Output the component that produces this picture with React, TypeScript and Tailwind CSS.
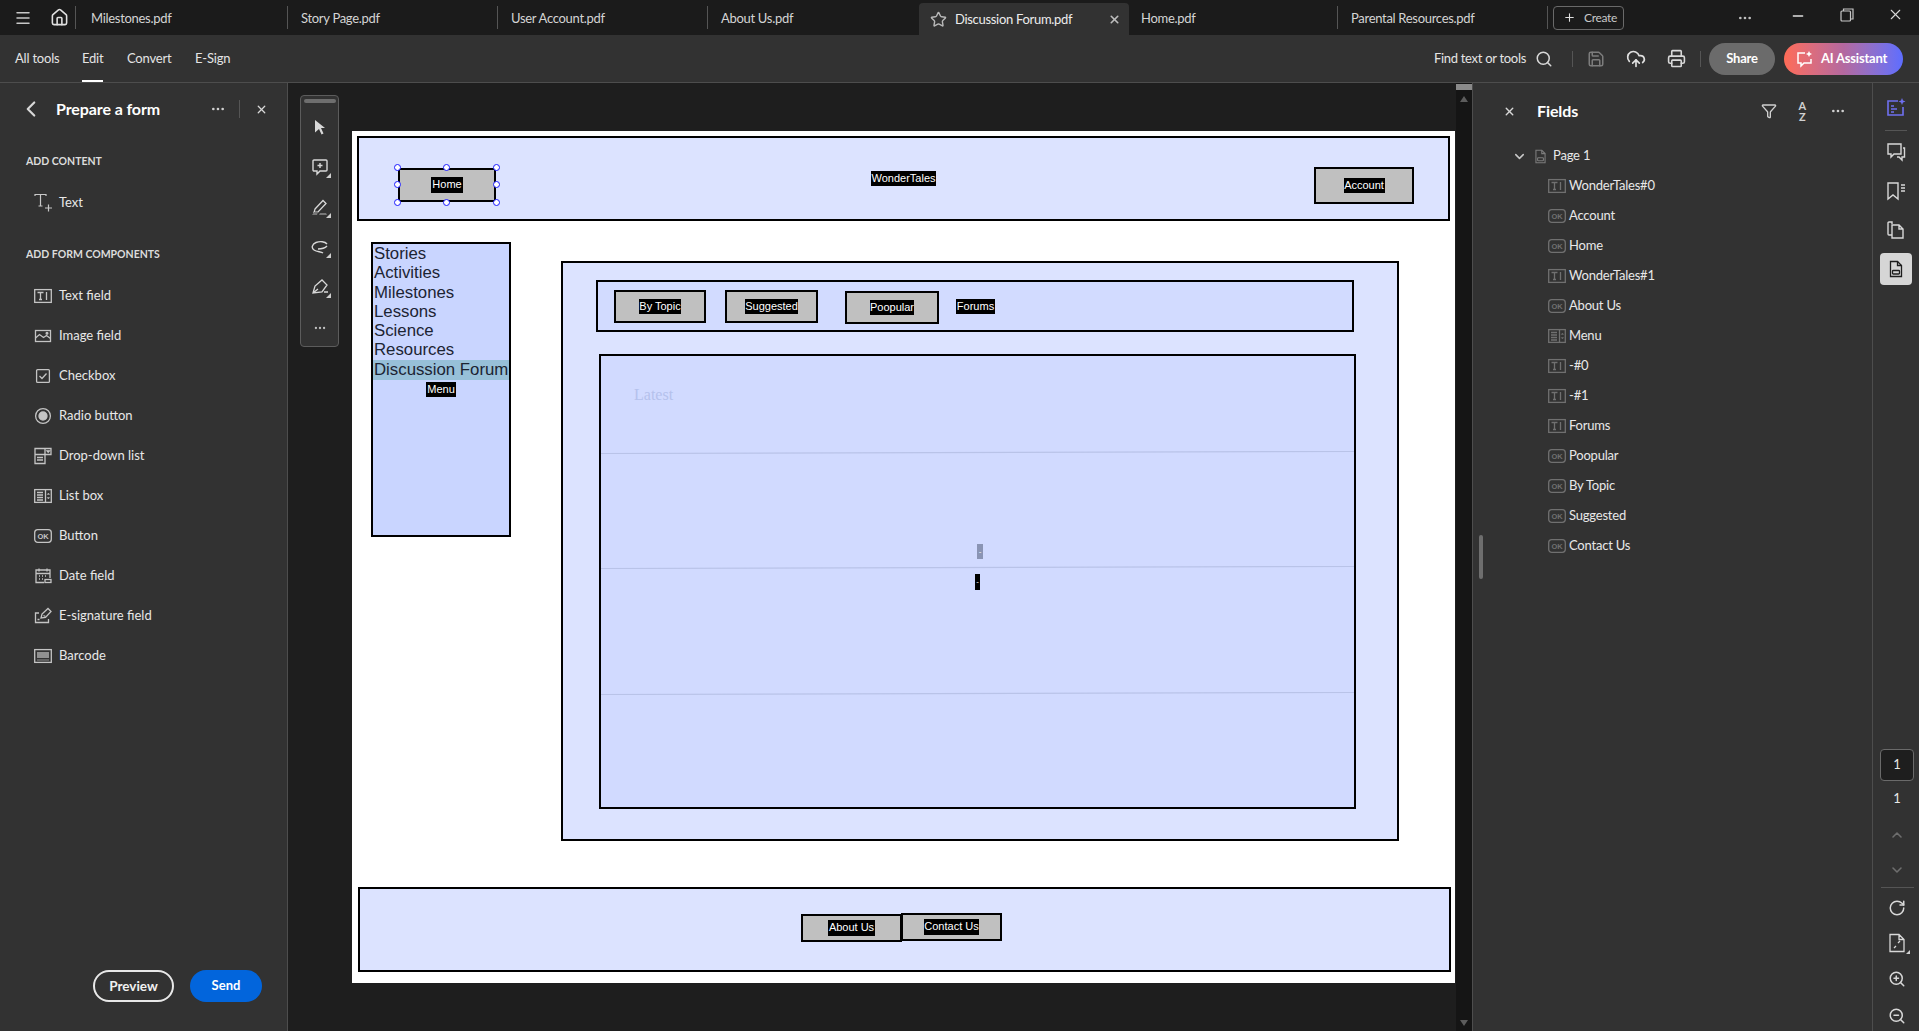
import React from 'react';
import {
    ChevronDown, ChevronLeft, ChevronUp, CloudUpload, Ellipsis, Funnel, House, Menu, Minus, Plus,
    Printer, RotateCw, Save, Search, Star, X, ZoomIn, ZoomOut,
} from 'lucide-react';

const tabs = [
    { name: 'Milestones.pdf', cls: 'w-[212px] pl-[15px] border-l' },
    { name: 'Story Page.pdf', cls: 'w-[210px] pl-[13px] border-l' },
    { name: 'User Account.pdf', cls: 'w-[210px] pl-[13px] border-l' },
    { name: 'About Us.pdf', cls: 'w-[212px] pl-[13px] border-l' },
];

const Svg = ({ children, size = 18, className = '' }: { children: React.ReactNode; size?: number; className?: string }) => (
    <svg width={size} height={size} viewBox="0 0 18 18" fill="none" stroke="currentColor" strokeWidth="1.3" className={className}>
        {children}
    </svg>
);

// form field glyphs
const TextFieldIcon = () => (
    <Svg>
        <rect x="0.7" y="2.6" width="16.6" height="12.8" />
        <path d="M3.5 5.5h6M6.5 5.5v7M5 12.5h3M12.5 5v8" />
    </Svg>
);
const ImageIcon = () => (
    <Svg>
        <rect x="1.5" y="3.5" width="15" height="11" />
        <path d="M1.5 11l4-3.5 4 3 3-2 4 3" />
        <circle cx="13" cy="6.3" r="0.9" fill="currentColor" />
    </Svg>
);
const CheckIcon = () => (
    <Svg>
        <rect x="2.6" y="2.6" width="12.8" height="12.8" rx="1" />
        <path d="M5.5 9l2.5 2.5 4.5-5" />
    </Svg>
);
const RadioIcon = () => (
    <Svg>
        <circle cx="9" cy="9" r="7.4" />
        <circle cx="9" cy="9" r="4" fill="currentColor" />
    </Svg>
);
const DropdownIcon = () => (
    <Svg>
        <path d="M1 1.5h16v6H11v9H1z" />
        <path d="M1 7.5h10M11 1.5v6M3 10.5h6M3 13h6" />
        <path d="M13 3.8h2.4l-1.2 1.4z" fill="currentColor" />
    </Svg>
);
const ListBoxIcon = () => (
    <Svg>
        <rect x="0.7" y="2.6" width="16.6" height="12.8" />
        <path d="M11.5 2.6v12.8M3 5.5h6M3 8h6M3 10.5h6M3 13h6" />
        <path d="M13.2 7.5l1.2-1.5 1.2 1.5zM13.2 10.5l1.2 1.5 1.2-1.5z" fill="currentColor" strokeWidth="0.4" />
    </Svg>
);
const OkIcon = () => (
    <Svg>
        <rect x="0.7" y="2.7" width="16.6" height="12.6" rx="3" />
        <text x="9" y="11.7" textAnchor="middle" fontSize="7.5" fontFamily="Liberation Sans, sans-serif" fill="currentColor" stroke="none" fontWeight="700">OK</text>
    </Svg>
);
const DateIcon = () => (
    <Svg>
        <path d="M10 15.5H2V3h14v8M2 6.5h14M5 1.5v3M13 1.5v3" />
        <path d="M5 9h1M8 9h1M11 9h1M5 12h1M8 12h1" />
        <rect x="11" y="12.5" width="6" height="3" />
    </Svg>
);
const SignIcon = () => (
    <Svg>
        <path d="M5 6H1.500v9.500h13V12" />
        <path d="M7 11l1-4 6-5.500 3 3-5.500 6z" />
        <path d="M3.500 12.500h2M9.500 8.500l2 1" />
    </Svg>
);
const BarcodeIcon = () => (
    <Svg>
        <rect x="0.7" y="2.6" width="16.6" height="12.8" />
        <path d="M4 5v6M6 5v6M8 5v6M10 5v6M12 5v6M14 5v6M4 12.500v1M6 12.500v1M8 12.500v1M10 12.500v1M12 12.500v1M14 12.500v1" />
    </Svg>
);
const PageDocIcon = ({ size = 18 }: { size?: number }) => (
    <Svg size={size}>
        <path d="M3.500 1.500h7l4 4v11h-11z" />
        <path d="M10.500 1.500v4h4" />
        <rect x="5.500" y="10.500" width="7" height="3.500" rx="0.8" />
    </Svg>
);
const Corner = () => <span className="absolute right-[-1px] bottom-[-1px] w-0 h-0 border-l-[5px] border-l-transparent border-b-[5px] border-b-[#d0d0d0]" />;

const ToolIcon = ({ children, corner = true, cls }: { children: React.ReactNode; corner?: boolean; cls: string }) => (
    <div className={`relative w-[20px] h-[20px] flex items-center justify-center text-[#d8d8d8] ${cls}`}>
        {children}
        {corner && <Corner />}
    </div>
);

const formItems = [
    { label: 'Text field', icon: <TextFieldIcon /> },
    { label: 'Image field', icon: <ImageIcon /> },
    { label: 'Checkbox', icon: <CheckIcon /> },
    { label: 'Radio button', icon: <RadioIcon /> },
    { label: 'Drop-down list', icon: <DropdownIcon /> },
    { label: 'List box', icon: <ListBoxIcon /> },
    { label: 'Button', icon: <OkIcon /> },
    { label: 'Date field', icon: <DateIcon /> },
    { label: 'E-signature field', icon: <SignIcon /> },
    { label: 'Barcode', icon: <BarcodeIcon /> },
];

const fieldRows = [
    { label: 'WonderTales#0', icon: <TextFieldIcon /> },
    { label: 'Account', icon: <OkIcon /> },
    { label: 'Home', icon: <OkIcon /> },
    { label: 'WonderTales#1', icon: <TextFieldIcon /> },
    { label: 'About Us', icon: <OkIcon /> },
    { label: 'Menu', icon: <ListBoxIcon /> },
    { label: '-#0', icon: <TextFieldIcon /> },
    { label: '-#1', icon: <TextFieldIcon /> },
    { label: 'Forums', icon: <TextFieldIcon /> },
    { label: 'Poopular', icon: <OkIcon /> },
    { label: 'By Topic', icon: <OkIcon /> },
    { label: 'Suggested', icon: <OkIcon /> },
    { label: 'Contact Us', icon: <OkIcon /> },
];

const menuItems = ['Stories', 'Activities', 'Milestones', 'Lessons', 'Science', 'Resources'];

const Tag = ({ children, cls }: { children: React.ReactNode; cls: string }) => (
    <span className={`block shrink-0 bg-black text-white text-[11px] leading-[15px] text-center overflow-hidden whitespace-nowrap ${cls}`}>
        {children}
    </span>
);

const FormButton = ({ children, cls }: { children: React.ReactNode; cls: string }) => (
    <div className={`shrink-0 border-2 border-black bg-[#c0c0c0] flex items-center justify-center ${cls}`}>{children}</div>
);

const Handle = ({ cls }: { cls: string }) => (
    <span className={`absolute w-[7px] h-[7px] rounded-full bg-white border-[1.5px] border-[#1a1aff] ${cls}`} />
);

const Slope = () => (
    <svg className="block w-full h-[3px] shrink-0" viewBox="0 0 753 3" preserveAspectRatio="none">
        <line x1="0" y1="2.5" x2="753" y2="0.5" stroke="#b9c3e8" strokeWidth="1.2" />
    </svg>
);

const TopBar = () => (
    <div className="h-[35px] shrink-0 bg-[#1b1b1b] flex items-center text-[13px] text-[#d4d4d4] tracking-[-0.3px]">
        <div className="w-[50px] pl-[14px] flex items-center"><Menu size={18} color="#c8c8c8" /></div>
        <div className="w-[25px] flex items-center"><House size={19} color="#e0e0e0" /></div>
        {tabs.map((t) => (
            <div key={t.name} className={`h-[23px] flex items-center pt-[3px] border-[#555] ${t.cls}`}>{t.name}</div>
        ))}
        <div className="w-[210px] h-[32px] mt-[3px] self-start bg-[#323232] rounded-t-[4px] flex items-center pl-[11px] text-[#ececec]">
            <Star size={17} color="#b8b8b8" strokeWidth={2} />
            <span className="ml-[8px] pt-[1px]">Discussion Forum.pdf</span>
            <X size={13} color="#bdbdbd" strokeWidth={3} className="ml-[36px]" />
        </div>
        <div className="w-[208px] pl-[12px] pt-[3px]">Home.pdf</div>
        <div className="w-[210px] h-[23px] flex items-center pl-[13px] pt-[3px] border-l border-[#555]">Parental Resources.pdf</div>
        <div className="h-[23px] border-l border-[#555]" />
        <div className="ml-[5px] w-[71px] h-[24px] rounded-[4px] border border-[#6a6a6a] flex items-center pl-[9px] text-[12px] text-[#c8c8c8]">
            <Plus size={13} color="#e0e0e0" strokeWidth={2} />
            <span className="ml-[8px]">Create</span>
        </div>
        <Ellipsis size={16} color="#c0c0c0" className="ml-[113px]" />
        <Minus size={16} color="#e0e0e0" className="ml-[37px] -mt-[4px]" />
        <svg width="14" height="14" viewBox="0 0 14 14" fill="none" stroke="#c8c8c8" strokeWidth="1.2" className="ml-[34px] -mt-[6px]">
            <rect x="1" y="3" width="9.5" height="10" rx="1" />
            <path d="M3.5 3V1h9.5v10h-2.5" />
        </svg>
        <X size={17} color="#d8d8d8" strokeWidth={1.5} className="ml-[33px] -mt-[6px]" />
    </div>
);

const Toolbar = () => (
    <div className="h-[48px] shrink-0 bg-[#323232] border-b border-[#4d4d4d] flex text-[13px] text-[#e4e4e4] tracking-[-0.2px]">
        <div className="pl-[15px] flex items-center">
            <span className="w-[67px] pt-[1px]">All tools</span>
            <div className="relative w-[45px] h-full flex items-center pt-[1px]">
                Edit
                <span className="absolute left-0 bottom-0 w-[21px] h-[2px] bg-white" />
            </div>
            <span className="w-[68px] pt-[1px]">Convert</span>
            <span className="pt-[1px]">E-Sign</span>
        </div>
        <div className="ml-auto flex items-center pr-[16px]">
            <span className="pt-[1px] tracking-[-0.3px]">Find text or tools</span>
            <Search size={18} color="#d8d8d8" className="ml-[9px]" />
            <div className="ml-[19px] h-[16px] border-l border-[#555]" />
            <Save size={18} color="#7c7c7c" className="ml-[14px]" />
            <CloudUpload size={20} color="#e0e0e0" className="ml-[21px]" />
            <Printer size={19} color="#d8d8d8" className="ml-[21px]" />
            <div className="ml-[14px] h-[16px] border-l border-[#555]" />
            <button className="ml-[8px] w-[66px] h-[32px] rounded-full bg-[#6b6b6b] text-white font-bold text-[13px]">Share</button>
            <button className="ml-[9px] w-[119px] h-[32px] rounded-full bg-linear-to-r from-[#ff6b55] via-[#b4689f] to-[#5d6dff] text-white font-bold text-[13px] flex items-center pl-[12px]">
                <svg width="18" height="18" viewBox="0 0 18 18" fill="none" stroke="#fff" strokeWidth="1.5">
                    <path d="M9 3H2v10h3v3l3-3h7V9" />
                    <path d="M8 8h.01M5 8h.01" />
                    <path d="M13 1l1 2 2 1-2 1-1 2-1-2-2-1 2-1z" fill="#fff" stroke="none" />
                </svg>
                <span className="ml-[7px]">AI Assistant</span>
            </button>
        </div>
    </div>
);

const LeftPanel = () => (
    <aside className="w-[288px] shrink-0 bg-[#323232] border-r border-[#4d4d4d] flex flex-col text-[13px] text-[#e8e8e8]">
        <div className="h-[52px] shrink-0 flex items-center pl-[18px]">
            <ChevronLeft size={26} color="#d8d8d8" strokeWidth={2} />
            <span className="ml-[12px] text-[16px] font-bold text-white tracking-[-0.1px]">Prepare a form</span>
            <Ellipsis size={16} color="#d0d0d0" className="ml-[50px]" />
            <div className="ml-[13px] h-[18px] border-l border-[#555]" />
            <X size={13} color="#d8d8d8" strokeWidth={2.4} className="ml-[15px]" />
        </div>
        <div className="mt-[7px] h-[40px] flex items-center pl-[26px] text-[10.5px] font-bold text-[#dcdcdc]">ADD CONTENT</div>
        <div className="h-[41px] flex items-center pl-[34px]">
            <svg width="19" height="19" viewBox="0 0 19 19" fill="none" stroke="#c8c8c8" strokeWidth="1.2">
                <path d="M1 3V1.500h11V3M6.500 1.500V13M4.500 13h4M11 15h7M14.500 11.500v7" />
            </svg>
            <span className="ml-[6px]">Text</span>
        </div>
        <div className="mt-[11px] mb-[1px] h-[41px] flex items-center pl-[26px] text-[10.5px] font-bold text-[#dcdcdc]">ADD FORM COMPONENTS</div>
        {formItems.map((item) => (
            <div key={item.label} className="h-[40px] shrink-0 flex items-center pl-[34px]">
                <span className="text-[#c4c4c4] flex">{item.icon}</span>
                <span className="ml-[7px]">{item.label}</span>
            </div>
        ))}
        <div className="mt-auto pb-[29px] pr-[25px] flex justify-end gap-[16px]">
            <button className="w-[81px] h-[32px] rounded-full border-2 border-[#e8e8e8] font-bold text-[13.5px] text-[#f0f0f0]">Preview</button>
            <button className="w-[72px] h-[32px] rounded-full bg-[#0265dc] font-bold text-[13px] text-white">Send</button>
        </div>
    </aside>
);

const ToolStrip = () => (
    <div className="ml-[12px] mt-[12px] w-[39px] h-[252px] shrink-0 rounded-[4px] border border-[#5c5c5c] bg-[#323232] flex flex-col items-center">
        <div className="mt-[3px] w-[32px] h-[4px] rounded-[2px] bg-[#6e6e6e]" />
        <ToolIcon corner={false} cls="mt-[14px]">
            <svg width="14" height="16" viewBox="0 0 14 16"><path d="M2 1l10 8H8l2.500 5.500-2 1L6 10l-4 3.500z" fill="#d8d8d8" /></svg>
        </ToolIcon>
        <ToolIcon cls="mt-[20px]">
            <svg width="18" height="18" viewBox="0 0 18 18" fill="none" stroke="#d8d8d8" strokeWidth="1.4">
                <path d="M3 2h12a1 1 0 0 1 1 1v9a1 1 0 0 1-1 1H9l-3 3v-3H3a1 1 0 0 1-1-1V3a1 1 0 0 1 1-1zM9 5v5M6.500 7.500h5" />
            </svg>
        </ToolIcon>
        <ToolIcon cls="mt-[20px]">
            <svg width="18" height="18" viewBox="0 0 18 18" fill="none" stroke="#d8d8d8" strokeWidth="1.3">
                <path d="M4 11L12 2.500l3 3L7 14l-4 .5z" />
                <path d="M1 17h5l1-3H3zM8 17h8l-1-2H9z" fill="#777" stroke="none" />
            </svg>
        </ToolIcon>
        <ToolIcon cls="mt-[20px]">
            <svg width="18" height="14" viewBox="0 0 18 14" fill="none" stroke="#d8d8d8" strokeWidth="1.4">
                <path d="M16 4C14 1.500 9 1 5 2.500S0 8 3 10s7 1.500 9 3M7 9c3 0 7-1 9-3" />
            </svg>
        </ToolIcon>
        <ToolIcon cls="mt-[20px]">
            <svg width="18" height="18" viewBox="0 0 18 18" fill="none" stroke="#d8d8d8" strokeWidth="1.3">
                <path d="M2 15L4 8l7-6 5 5-5 7zM2 15l5-4M8 10h.01M13 14h4" />
            </svg>
        </ToolIcon>
        <Ellipsis size={14} color="#c0c0c0" className="mt-[24px]" />
    </div>
);

const PdfPage = () => (
    <div className="ml-[13px] mt-[48px] w-[1103px] h-[852px] shrink-0 bg-white font-['Liberation_Sans',sans-serif]">
        {/* header band */}
        <div className="ml-[5px] pt-[5px]">
            <div className="w-[1093px] h-[85px] border-2 border-black bg-[#dce3ff] flex items-start">
                <div className="relative ml-[39px] mt-[30px]">
                    <FormButton cls="w-[98px] h-[34px]"><Tag cls="w-[32px] h-[16px]">Home</Tag></FormButton>
                    <Handle cls="left-[-4px] top-[-4px]" />
                    <Handle cls="left-[45px] top-[-4px]" />
                    <Handle cls="right-[-4px] top-[-4px]" />
                    <Handle cls="left-[-4px] top-[13px]" />
                    <Handle cls="right-[-4px] top-[13px]" />
                    <Handle cls="left-[-4px] bottom-[-4px]" />
                    <Handle cls="left-[45px] bottom-[-4px]" />
                    <Handle cls="right-[-4px] bottom-[-4px]" />
                </div>
                <Tag cls="ml-[375px] mt-[33px] w-[65px] h-[15px]">WonderTales</Tag>
                <FormButton cls="ml-[378px] mt-[29px] w-[100px] h-[37px]"><Tag cls="w-[41px] h-[15px]">Account</Tag></FormButton>
            </div>
        </div>

        <div className="flex items-start">
            {/* side menu */}
            <div className="ml-[19px] mt-[21px] w-[140px] h-[295px] shrink-0 border-2 border-black bg-[#c9d5ff] text-[16.8px] leading-[19.3px] text-[#1c2433]">
                {menuItems.map((m) => (
                    <div key={m} className="pl-[1px]">{m}</div>
                ))}
                <div className="pl-[1px] h-[20px] bg-[#97c0d8] whitespace-nowrap">Discussion Forum</div>
                <Tag cls="mx-auto mt-[2px] w-[30px] h-[15px]">Menu</Tag>
            </div>

            {/* forum panel */}
            <div className="ml-[50px] mt-[40px] w-[838px] h-[580px] shrink-0 border-2 border-black bg-[#dce3ff]">
                <div className="ml-[33px] mt-[17px] w-[758px] h-[52px] border-2 border-black bg-[#d2dbff] flex items-start">
                    <FormButton cls="ml-[16px] mt-[8px] w-[92px] h-[33px]"><Tag cls="w-[42px]">By Topic</Tag></FormButton>
                    <FormButton cls="ml-[19px] mt-[8px] w-[93px] h-[33px]"><Tag cls="w-[53px]">Suggested</Tag></FormButton>
                    <FormButton cls="ml-[27px] mt-[9px] w-[94px] h-[33px]"><Tag cls="w-[44px]">Poopular</Tag></FormButton>
                    <Tag cls="ml-[17px] mt-[17px] w-[39px]">Forums</Tag>
                </div>
                <div className="ml-[36px] mt-[22px] w-[757px] h-[455px] border-2 border-black bg-[#d1daff] flex flex-col">
                    <div className="h-[95px] shrink-0 pl-[33px] pt-[31px] font-['Liberation_Serif',serif] text-[16px] leading-[16px] text-[#b5c1ec]">Latest</div>
                    <Slope />
                    <div className="h-[112px] shrink-0 pl-[376px] pt-[90px]">
                        <div className="w-[6px] h-[15px] bg-[#8a94b4] text-white text-[8px] leading-[15px] text-center overflow-hidden">-</div>
                    </div>
                    <Slope />
                    <div className="h-[123px] shrink-0 pl-[374px] pt-[5px]">
                        <div className="w-[5px] h-[16px] bg-black text-white text-[8px] leading-[16px] text-center overflow-hidden">-</div>
                    </div>
                    <Slope />
                </div>
            </div>
        </div>

        {/* footer band */}
        <div className="ml-[6px] mt-[46px] w-[1093px] h-[85px] border-2 border-black bg-[#dce3ff] flex items-start">
            <FormButton cls="ml-[441px] mt-[25px] w-[101px] h-[28px]"><Tag cls="w-[47px] h-[16px]">About Us</Tag></FormButton>
            <FormButton cls="-ml-[1px] mt-[24px] w-[101px] h-[28px]"><Tag cls="w-[55px] h-[16px]">Contact Us</Tag></FormButton>
        </div>
    </div>
);

const RightPanel = () => (
    <aside className="relative w-[400px] shrink-0 bg-[#323232] border-l border-[#4d4d4d] text-[13px] text-[#e8e8e8] tracking-[-0.2px]">
        <span className="absolute left-[6px] top-[452px] w-[4px] h-[44px] rounded-[2px] bg-[#6e6e6e]" />
        <div className="h-[56px] mb-[2px] flex items-center pl-[30px]">
            <X size={13} color="#d8d8d8" strokeWidth={2.6} />
            <span className="ml-[21px] text-[16px] font-bold text-white tracking-[-0.1px]">Fields</span>
            <Funnel size={16} color="#d0d0d0" className="ml-[183px]" />
            <div className="ml-[19px] w-[12px] flex flex-col items-center text-[11px] leading-[11px] font-bold text-[#d0d0d0]">
                <span>A</span>
                <span>Z</span>
            </div>
            <Ellipsis size={16} color="#d0d0d0" className="ml-[22px]" />
        </div>
        <div className="h-[30px] flex items-center pl-[39px]">
            <ChevronDown size={15} color="#c8c8c8" strokeWidth={2.4} />
            <span className="ml-[6px] text-[#7c7c7c] flex"><PageDocIcon size={15} /></span>
            <span className="ml-[5px]">Page 1</span>
        </div>
        {fieldRows.map((r) => (
            <div key={r.label} className="h-[30px] flex items-center pl-[75px]">
                <span className="text-[#707070] flex">{r.icon}</span>
                <span className="ml-[3px]">{r.label}</span>
            </div>
        ))}
    </aside>
);

const RightRail = () => (
    <aside className="w-[47px] shrink-0 bg-[#323232] border-l border-[#4d4d4d] flex flex-col items-center text-[13px] text-[#e8e8e8]">
        <div className="mt-[6px] h-[38px] flex items-center">
            <svg width="20" height="20" viewBox="0 0 20 20" fill="none" stroke="#6f70f0" strokeWidth="1.6">
                <path d="M12 3H2v14h15V9M5 8h3M5 11h6M5 14h3" />
                <path d="M16 0l1 2.500L19.500 3.500 17 4.500 16 7 15 4.500 12.500 3.500 15 2.500z" fill="#6f70f0" stroke="none" />
            </svg>
        </div>
        <div className="mt-[3px] w-[22px] h-px bg-[#555]" />
        <div className="mt-[2px] h-[38px] flex items-center">
            <svg width="20" height="20" viewBox="0 0 20 20" fill="none" stroke="#d8d8d8" strokeWidth="1.4">
                <path d="M2 2h13v10H8l-3 3v-3H2z" />
                <path d="M17 6h1.500v9H16v3l-3-3h-2" />
            </svg>
        </div>
        <div className="mt-[1px] h-[38px] flex items-center">
            <svg width="20" height="20" viewBox="0 0 20 20" fill="none" stroke="#d8d8d8" strokeWidth="1.4">
                <path d="M2 2h10v16l-5-4-5 4zM15 4h4M15 7h4M15 10h4" />
            </svg>
        </div>
        <div className="mt-[1px] h-[38px] flex items-center">
            <svg width="20" height="20" viewBox="0 0 20 20" fill="none" stroke="#d8d8d8" strokeWidth="1.4">
                <path d="M6 4V2H3a1 1 0 0 0-1 1v11a1 1 0 0 0 1 1h3" />
                <path d="M6 5h7l4 4v9H6zM13 5v4h4" />
            </svg>
        </div>
        <div className="mt-[4px] w-[32px] h-[32px] rounded-[4px] bg-[#d6d6d6] flex items-center justify-center text-[#1e1e1e]">
            <PageDocIcon size={18} />
        </div>
        <div className="mt-[464px] ml-[2px] w-[34px] h-[32px] rounded-[4px] bg-[#1e1e1e] border border-[#6a6a6a] flex items-center justify-center">1</div>
        <div className="ml-[2px] h-[36px] flex items-center">1</div>
        <div className="ml-[2px] h-[36px] flex items-center"><ChevronUp size={16} color="#6e6e6e" strokeWidth={2.4} /></div>
        <div className="ml-[2px] h-[34px] flex items-center"><ChevronDown size={16} color="#6e6e6e" strokeWidth={2.4} /></div>
        <div className="ml-[2px] w-[33px] h-px bg-[#555]" />
        <div className="ml-[2px] h-[40px] flex items-center"><RotateCw size={18} color="#d8d8d8" /></div>
        <div className="relative ml-[2px] h-[30px] flex items-center">
            <svg width="18" height="20" viewBox="0 0 18 20" fill="none" stroke="#d8d8d8" strokeWidth="1.3">
                <path d="M2 1.500h9l5 5v12H2zM11 1.500v5h5M6 15l2-2M10 10l2-2" />
            </svg>
            <span className="absolute right-[-4px] bottom-[4px] w-0 h-0 border-l-[4px] border-l-transparent border-b-[4px] border-b-[#d0d0d0]" />
        </div>
        <div className="ml-[2px] h-[42px] flex items-center"><ZoomIn size={18} color="#d8d8d8" /></div>
        <div className="ml-[2px] h-[31px] flex items-center"><ZoomOut size={18} color="#d8d8d8" /></div>
    </aside>
);

export default function App() {
    return (
        <div className="w-[1919px] h-[1031px] flex flex-col overflow-hidden bg-[#323232] font-['Lato',sans-serif]">
            <TopBar />
            <Toolbar />
            <div className="flex-1 min-h-0 flex">
                <LeftPanel />
                <main className="w-[1184px] shrink-0 bg-[#1e1e1e] flex">
                    <ToolStrip />
                    <PdfPage />
                    <div className="ml-[1px] w-[16px] shrink-0 bg-[#151515] flex flex-col items-center">
                        <div className="mt-[1px] w-[16px] h-[6px] bg-[#8a8a8a]" />
                        <div className="mt-[6px] w-0 h-0 border-x-[4px] border-x-transparent border-b-[6px] border-b-[#5c5c5c]" />
                        <div className="mt-auto mb-[5px] w-0 h-0 border-x-[4px] border-x-transparent border-t-[6px] border-t-[#5c5c5c]" />
                    </div>
                </main>
                <RightPanel />
                <RightRail />
            </div>
        </div>
    );
}
